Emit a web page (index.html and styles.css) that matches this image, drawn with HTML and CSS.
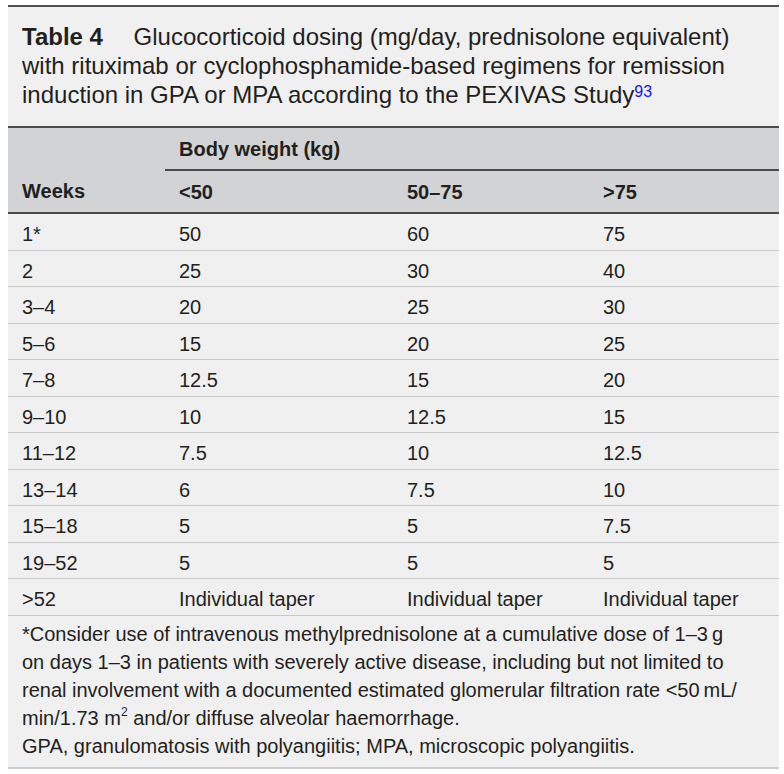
FILE: index.html
```html
<!DOCTYPE html>
<html lang="en">
<head>
<meta charset="utf-8">
<title>Table 4</title>
<link rel="stylesheet" href="styles.css">
</head>
<body>
<div class="tbl">
  <div class="caption">
    <span class="label">Table 4</span> Glucocorticoid dosing (mg/day, prednisolone equivalent)<br>with rituximab or cyclophosphamide-based regimens for remission<br>induction in GPA or MPA according to the PEXIVAS Study<sup class="ref">93</sup>
  </div>
  <table class="dose">
    <colgroup>
      <col class="c1"><col class="c2"><col class="c3"><col class="c4">
    </colgroup>
    <thead>
      <tr class="h1">
        <th></th>
        <th colspan="3" class="span">Body weight (kg)</th>
      </tr>
      <tr class="h2">
        <th>Weeks</th>
        <th>&lt;50</th>
        <th>50–75</th>
        <th>&gt;75</th>
      </tr>
    </thead>
    <tbody>
      <tr><td>1*</td><td>50</td><td>60</td><td>75</td></tr>
      <tr><td>2</td><td>25</td><td>30</td><td>40</td></tr>
      <tr><td>3–4</td><td>20</td><td>25</td><td>30</td></tr>
      <tr><td>5–6</td><td>15</td><td>20</td><td>25</td></tr>
      <tr><td>7–8</td><td>12.5</td><td>15</td><td>20</td></tr>
      <tr><td>9–10</td><td>10</td><td>12.5</td><td>15</td></tr>
      <tr><td>11–12</td><td>7.5</td><td>10</td><td>12.5</td></tr>
      <tr><td>13–14</td><td>6</td><td>7.5</td><td>10</td></tr>
      <tr><td>15–18</td><td>5</td><td>5</td><td>7.5</td></tr>
      <tr><td>19–52</td><td>5</td><td>5</td><td>5</td></tr>
      <tr><td>&gt;52</td><td>Individual taper</td><td>Individual taper</td><td>Individual taper</td></tr>
    </tbody>
  </table>
  <div class="notes">
    <p>*Consider use of intravenous methylprednisolone at a cumulative dose of 1–3&#8201;g<br>on days 1–3 in patients with severely active disease, including but not limited to<br>renal involvement with a documented estimated glomerular filtration rate &lt;50&#8201;mL/<br>min/1.73 m<sup>2</sup> and/or diffuse alveolar haemorrhage.</p>
    <p>GPA, granulomatosis with polyangiitis; MPA, microscopic polyangiitis.</p>
  </div>
</div>
</body>
</html>
```
FILE: styles.css
```css
html, body {
  margin: 0;
  padding: 0;
  background: #ffffff;
}

body {
  font-family: "Liberation Sans", Arial, sans-serif;
  color: #231f20;
}

.tbl {
  width: 771px;
  margin: 5px 0 0 8px;
  border-top: 2px solid #505050;
  border-bottom: 2px solid #cdcdcd;
  background: #f0f0f0;
}

.caption {
  font-size: 24px;
  line-height: 29px;
  padding: 15px 14px 17px;
  white-space: nowrap;
}

.label {
  font-weight: bold;
  margin-right: 24px;
}

.ref {
  font-size: 16px;
  line-height: 0;
  vertical-align: 6px;
  color: #1515f0;
}

.dose {
  width: 771px;
  border-collapse: collapse;
  table-layout: fixed;
  font-size: 20px;
}

.c1 { width: 157px; }
.c2 { width: 228px; }
.c3 { width: 196px; }
.c4 { width: 190px; }

.dose thead {
  background: #d1d3d4;
}

.dose th {
  text-align: left;
  font-weight: bold;
  line-height: 24px;
  padding: 0 14px;
  white-space: nowrap;
}

.dose .h1 th {
  border-top: 2px solid #4a4a4a;
  height: 40px;
  padding-top: 1px;
}

.dose .h1 .span {
  border-bottom: 2px solid #4a4a4a;
}

.dose .h2 th {
  height: 41px;
  padding-top: 0;
  border-bottom: 2px solid #4a4a4a;
}

.dose td {
  line-height: 24px;
  padding: 8px 14px 3.5px;
  border-bottom: 1px solid #c9c9c9;
  white-space: nowrap;
}

.notes {
  font-size: 20px;
  line-height: 28px;
  padding: 4px 14px 7px;
  white-space: nowrap;
}

.notes p {
  margin: 0;
}

.notes sup {
  font-size: 12px;
  line-height: 0;
  vertical-align: 9px;
}
```
